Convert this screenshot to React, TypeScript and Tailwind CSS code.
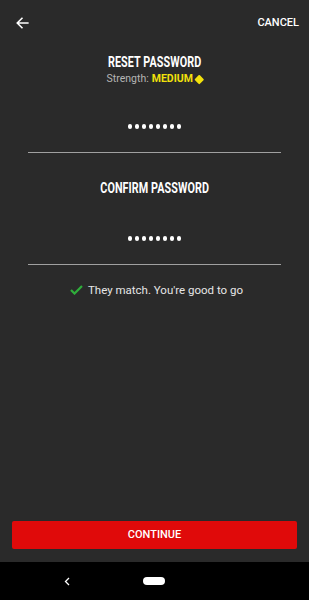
import { useState } from 'react';

function Dots({ count = 8 }: { count?: number }) {
  return (
    <div className="flex items-center justify-center gap-[2.5px]">
      {Array.from({ length: count }).map((_, i) => (
        <span key={i} className="w-[4.5px] h-[4.5px] rounded-full bg-white" />
      ))}
    </div>
  );
}

function PasswordField() {
  return (
    <div className="mx-[28px] flex flex-col">
      <div className="h-[26px] flex items-center justify-center">
        <Dots />
      </div>
      <div className="mt-[12px] h-px bg-[#a0a0a0]" />
    </div>
  );
}

function Heading({ children }: { children: string }) {
  return (
    <div className="flex justify-center">
      <span className="inline-block text-[14px] font-bold leading-none tracking-[0.1px] scale-x-[0.77]">
        {children}
      </span>
    </div>
  );
}

export default function App() {
  const [password] = useState('••••••••');

  return (
    <div
      className="w-[309px] h-[600px] bg-[#2a2a2a] flex flex-col text-white"
      style={{ fontFamily: 'Roboto, "Liberation Sans", sans-serif' }}
      data-value={password}
    >
      {/* Top bar */}
      <header className="h-[46px] flex items-center justify-between pl-[15px] pr-[10px]">
        <svg width="15" height="14" viewBox="0 0 16 16" fill="none" stroke="white" strokeWidth="1.8">
          <path d="M15 8H2M8 2L2 8l6 6" />
        </svg>
        <span className="text-[11px] font-medium">CANCEL</span>
      </header>

      <div className="flex flex-col items-center mt-[9px]">
        <Heading>RESET PASSWORD</Heading>
        <p className="mt-[5px] text-[10.5px] leading-none text-[#b5b5b5] flex items-center">
          Strength:
          <span className="ml-[3px] font-bold text-[#f2e10c]">MEDIUM</span>
          <span className="ml-[3px] w-[6.5px] h-[6.5px] rotate-45 bg-[#f2e10c] rounded-[1px]" />
        </p>
      </div>

      <div className="mt-[29px]">
        <PasswordField />
      </div>

      <div className="mt-[28px]">
        <Heading>CONFIRM PASSWORD</Heading>
      </div>

      <div className="mt-[31px]">
        <PasswordField />
      </div>

      <div className="mt-[17px] flex items-center justify-center gap-[5px] pl-[4px]">
        <svg width="13" height="10" viewBox="0 0 13 10" fill="none" stroke="#2fae3b" strokeWidth="2.2">
          <path d="M1 5l3.5 3.5L12 1" />
        </svg>
        <span className="text-[11.5px] text-[#e6e6e6]">They match. You're good to go</span>
      </div>

      <div className="flex-1" />

      <div className="px-[12px] pb-[13px]">
        <button className="w-full h-[28px] rounded-[2px] bg-[#e00a0a] text-[11px] font-medium text-white">
          CONTINUE
        </button>
      </div>

      {/* System nav bar */}
      <nav className="h-[38px] bg-black flex items-center">
        <svg className="ml-[64px]" width="6" height="9" viewBox="0 0 6 9" fill="none" stroke="white" strokeWidth="1.3">
          <path d="M5 1L1.5 4.5 5 8" />
        </svg>
        <span className="ml-[73px] w-[22px] h-[8px] rounded-full bg-white" />
      </nav>
    </div>
  );
}
